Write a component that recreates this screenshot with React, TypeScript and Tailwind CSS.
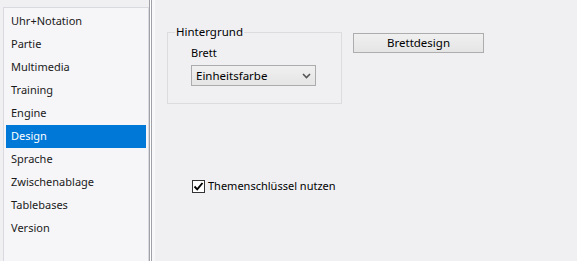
import React from "react";

const pages = [
    "Uhr+Notation",
    "Partie",
    "Multimedia",
    "Training",
    "Engine",
    "Design",
    "Sprache",
    "Zwischenablage",
    "Tablebases",
    "Version",
];

function Checkbox({ checked }: { checked: boolean }) {
    return (
        <span className="flex items-center justify-center w-[13px] h-[13px] border border-[#333333] bg-white">
            {checked && (
                <svg width="11" height="11" viewBox="0 0 11 11">
                    <path d="M1.5 5.5 L4.2 8.3 L9.5 2" fill="none" stroke="#000" strokeWidth="1.9" />
                </svg>
            )}
        </span>
    );
}

export default function App() {
    const selected = "Design";

    return (
        <div
            className="flex w-[577px] h-[261px] overflow-hidden bg-[#f0f0f3] text-[11px] text-[#1a1a1a]"
            style={{ fontFamily: '"Noto Sans", "Open Sans", sans-serif' }}
        >
            {/* page list */}
            <div className="flex pl-[3px] pt-[7px] bg-[#f0f0f3]">
                <div className="w-[146px] h-[260px] border border-[#d9d9e0] bg-[#f6f6f9] px-[2px] pt-[2px]">
                    {pages.map((p) => (
                        <div
                            key={p}
                            className={`h-[23px] flex items-center pl-[5px] ${
                                p === selected ? "bg-[#0078d7] text-white" : ""
                            }`}
                        >
                            {p}
                        </div>
                    ))}
                </div>
                {/* splitter */}
                <div className="flex h-[261px] -mt-[7px]">
                    <div className="w-[1px] bg-[#a0a0a8]" />
                    <div className="w-[1px] bg-white" />
                    <div className="w-[1px] bg-[#a0a0a8]" />
                    <div className="w-[3px] bg-[#f7f7f9]" />
                </div>
            </div>

            {/* settings */}
            <div className="flex flex-col pl-[12px] text-black">
                <div className="flex items-start">
                    <fieldset className="mt-[24px] w-[175px] h-[80px] border border-[#dcdcdc]">
                        <legend className="ml-[7px] px-[1px] h-[16px] leading-[16px] text-[11.5px]">Hintergrund</legend>
                        <div className="pl-[23px]">
                            <div className="mt-[5px] leading-[16px]">Brett</div>
                            <div className="mt-[4px] flex items-center w-[125px] h-[21px] border border-[#acacac] bg-gradient-to-b from-[#f0f0f0] to-[#e5e5e5] pl-[4px] pr-[4px]">
                                <span className="flex-1 text-[11.5px]">Einheitsfarbe</span>
                                <svg width="9" height="6" viewBox="0 0 9 6">
                                    <path d="M1 1 L4.5 4.5 L8 1" fill="none" stroke="#555" strokeWidth="1.6" />
                                </svg>
                            </div>
                        </div>
                    </fieldset>
                    <button className="ml-[11px] mt-[33px] w-[131px] h-[20px] border border-[#adadad] bg-gradient-to-b from-[#f0f0f0] to-[#e5e5e5] text-black leading-[18px] text-[11.5px]">
                        Brettdesign
                    </button>
                </div>
                <label className="mt-[74px] ml-[25px] flex items-center gap-[3px] h-[16px]">
                    <Checkbox checked />
                    <span>Themenschlüssel nutzen</span>
                </label>
            </div>
        </div>
    );
}
